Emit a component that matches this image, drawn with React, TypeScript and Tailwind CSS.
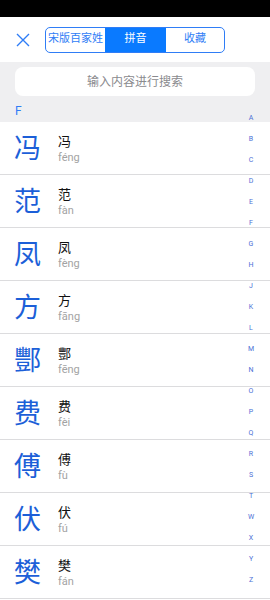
import React from 'react';

const rows = [
  { c: '冯', p: 'féng' },
  { c: '范', p: 'fàn' },
  { c: '凤', p: 'fèng' },
  { c: '方', p: 'fāng' },
  { c: '酆', p: 'fēng' },
  { c: '费', p: 'fèi' },
  { c: '傅', p: 'fù' },
  { c: '伏', p: 'fú' },
  { c: '樊', p: 'fán' },
];

const letters = 'ABCDEFGHJKLMNOPQRSTWXYZ'.split('');

export default function App() {
  return (
    <div
      className="relative w-[270px] h-[600px] overflow-hidden bg-white"
      style={{ fontFamily: 'Roboto, "Noto Sans CJK SC", sans-serif' }}
    >
      {/* status bar */}
      <div className="h-[17px] bg-black" />

      {/* header */}
      <div className="h-[45px] flex items-center">
        <button className="w-[45px] h-full flex items-center justify-center text-[#2f7df6]">
          <svg width="14" height="14" viewBox="0 0 14 14" fill="none" stroke="currentColor" strokeWidth="1.4">
            <path d="M1 1 L13 13 M13 1 L1 13" />
          </svg>
        </button>
        <div className="flex w-[180px] h-[26px] border border-[#2f7df6] rounded-[5px] overflow-hidden text-[11px]">
          <div className="w-[59px] flex items-center justify-center text-[#2f7df6] whitespace-nowrap">宋版百家姓</div>
          <div className="w-[61px] flex items-center justify-center bg-[#0a7aff] text-white">拼音</div>
          <div className="flex-1 flex items-center justify-center text-[#2f7df6]">收藏</div>
        </div>
      </div>

      {/* search */}
      <div className="bg-[#efeff1] px-[15px] pt-[5px] pb-[4px]">
        <div className="h-[29px] bg-white rounded-[8px] flex items-center justify-center text-[12px] text-[#8a8a8e]">
          输入内容进行搜索
        </div>
      </div>

      {/* section header */}
      <div className="h-[22px] bg-[#efeff1] flex items-center px-[15px] text-[12px] text-[#2f7df6]">F</div>

      {/* rows */}
      <div>
        {rows.map((r) => (
          <div key={r.c} className="h-[53px] border-b border-[#dcdcde] flex items-center">
            <div className="w-[58px] pl-[14px] text-[27px] leading-none text-[#1c5fd8] pt-[3px]">{r.c}</div>
            <div className="flex flex-col pt-[3px]">
              <span className="text-[13px] leading-[16px] text-[#111]">{r.c}</span>
              <span className="text-[11px] leading-[15px] text-[#a3a3a3]">{r.p}</span>
            </div>
          </div>
        ))}
      </div>

      {/* index strip */}
      <div className="absolute right-0 top-[108px] w-[38px] flex flex-col items-center">
        {letters.map((l) => (
          <div key={l} className="h-[21px] leading-[21px] text-[7px] text-[#4b6fd6]">
            {l}
          </div>
        ))}
      </div>
    </div>
  );
}
